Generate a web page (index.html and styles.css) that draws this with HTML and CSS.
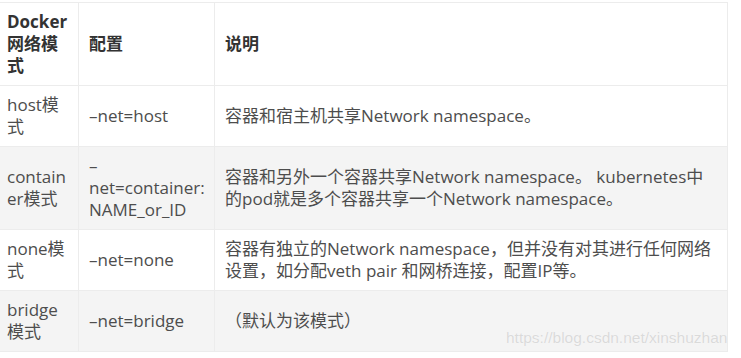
FILE: index.html
```html
<!DOCTYPE html>
<html>
<head>
   <meta charset="UTF-8">
   <title>Docker 网络模式</title>
   <link rel="stylesheet" href="styles.css">
</head>
<body>
   <table class="net-table">
       <colgroup>
           <col class="col-mode">
           <col class="col-conf">
           <col class="col-desc">
       </colgroup>
       <thead>
           <tr>
               <th>Docker 网络模式</th>
               <th>配置</th>
               <th>说明</th>
           </tr>
       </thead>
       <tbody>
           <tr>
               <td>host模式</td>
               <td>–net=host</td>
               <td>容器和宿主机共享Network namespace。</td>
           </tr>
           <tr>
               <td>container模式</td>
               <td>–net=container: NAME_or_ID</td>
               <td>容器和另外一个容器共享Network namespace。 kubernetes中的pod就是多个容器共享一个Network namespace。</td>
           </tr>
           <tr>
               <td>none模式</td>
               <td>–net=none</td>
               <td>容器有独立的Network namespace，但并没有对其进行任何网络设置，如分配veth pair 和网桥连接，配置IP等。</td>
           </tr>
           <tr>
               <td>bridge模式</td>
               <td>–net=bridge</td>
               <td>（默认为该模式）</td>
           </tr>
       </tbody>
   </table>

   <div class="watermark">https://blog.csdn.net/xinshuzhan</div>
</body>
</html>
```

FILE: styles.css
```css
* {
    margin: 0;
    padding: 0;
    box-sizing: border-box;
}

body {
    font-family: 'Open Sans', 'Noto Sans CJK SC', sans-serif;
    font-size: 17px;
    line-height: 22px;
    color: #4d4d4d;
    background: #fff;
}

.net-table {
    margin: 2px 0 0 -4px;
    width: 731px;
    table-layout: fixed;
    border-collapse: collapse;
}

.col-mode { width: 82px; }
.col-conf { width: 136px; }
.col-desc { width: 513px; }

.net-table th,
.net-table td {
    padding: 8px 11px 8px 10px;
    border: 1px solid #ececec;
    text-align: left;
    vertical-align: middle;
    overflow-wrap: break-word;
    word-wrap: break-word;
}

/* narrow columns need a bit more room on the right */
.net-table th:nth-child(-n+2),
.net-table td:nth-child(-n+2) {
    padding-right: 6px;
}

.net-table th {
    font-weight: 700;
    color: #333;
}

.net-table tbody tr:nth-child(2n) {
    background-color: #f4f4f4;
}

.watermark {
    position: absolute;
    left: 506px;
    top: 328px;
    font-family: 'Liberation Sans', sans-serif;
    font-size: 15.5px;
    line-height: 20px;
    color: #dadada;
    text-shadow: 0 0 1px #fff;
    white-space: nowrap;
}
```
